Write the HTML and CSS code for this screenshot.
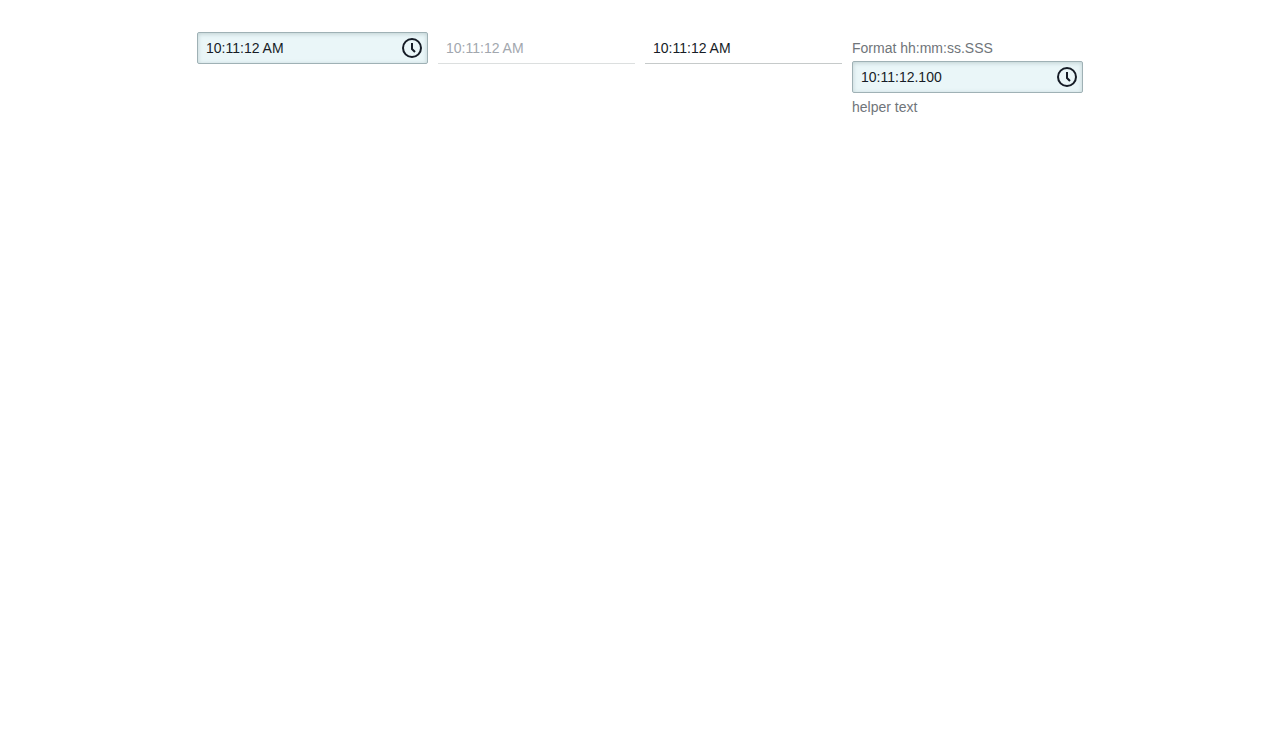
FILE: index.html
```html
<!DOCTYPE html>
<html lang="en">
<head>
<meta charset="utf-8">
<meta name="viewport" content="width=device-width, initial-scale=1">
<title>Time picker</title>
<link rel="stylesheet" href="styles.css">
</head>
<body>
<main class="row">
  <div class="picker">
    <div class="field">
      <input class="field-input" type="text" value="10:11:12 AM" aria-label="Time">
      <button class="field-button" type="button" aria-label="Choose time">
        <svg class="icon" viewBox="0 0 24 24" aria-hidden="true"><circle cx="12" cy="12" r="9"/><path d="M12 7v6l3 3"/></svg>
      </button>
    </div>
  </div>
  <div class="picker">
    <div class="field field-plain field-disabled">
      <input class="field-input" type="text" value="10:11:12 AM" aria-label="Disabled time" disabled>
    </div>
  </div>
  <div class="picker">
    <div class="field field-plain">
      <input class="field-input" type="text" value="10:11:12 AM" aria-label="Read-only time" readonly>
    </div>
  </div>
  <div class="picker">
    <label class="label" for="time-ms">Format hh:mm:ss.SSS</label>
    <div class="field">
      <input class="field-input" id="time-ms" type="text" value="10:11:12.100" aria-describedby="time-help">
      <button class="field-button" type="button" aria-label="Choose time with milliseconds">
        <svg class="icon" viewBox="0 0 24 24" aria-hidden="true"><circle cx="12" cy="12" r="9"/><path d="M12 7v6l3 3"/></svg>
      </button>
    </div>
    <div class="helper" id="time-help">helper text</div>
  </div>
</main>
</body>
</html>
```
FILE: styles.css
```css
* { box-sizing: border-box; }

body {
  margin: 0;
  background: #fff;
  color: #161c26;
  font-family: "Liberation Sans", Arial, sans-serif;
  font-size: 14px;
  line-height: 16px;
}

.row {
  display: flex;
  flex-wrap: wrap;
  justify-content: center;
  align-items: flex-start;
  gap: 10px;
  padding: 32px 16px;
}

.field {
  display: flex;
  align-items: center;
  height: 32px;
  border: 1px solid #9fb1b5;
  border-radius: 2px;
  background: #eaf6f8;
  box-shadow: inset 0 1px 4px rgba(60, 90, 95, 0.25);
}

.field-plain {
  border-width: 0 0 1px;
  border-color: #c6caca;
  border-radius: 0;
  background: transparent;
  box-shadow: none;
}

.field-disabled { border-color: #dcdfdf; }

.field-input {
  width: 197px;
  height: 30px;
  padding: 0 8px;
  border: 0;
  outline: 0;
  background: transparent;
  color: inherit;
  font: inherit;
}

.field-disabled .field-input { color: #a2a7ae; }

.field-button {
  display: flex;
  align-items: center;
  justify-content: flex-end;
  width: 32px;
  height: 30px;
  padding: 0 3px 0 0;
  border: 0;
  background: transparent;
  color: #161c26;
}

.icon {
  width: 24px;
  height: 24px;
  fill: none;
  stroke: currentColor;
  stroke-width: 2;
}

.label,
.helper {
  display: block;
  color: #70757a;
}

.label { padding: 8px 0 5px; }

.helper { padding-top: 6px; }
```
